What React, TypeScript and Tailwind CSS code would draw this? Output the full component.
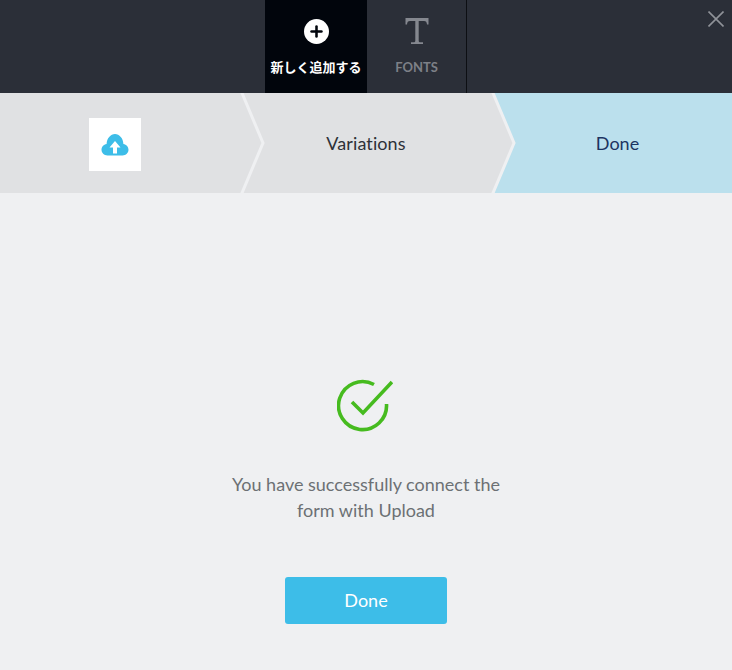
import { Plus } from 'lucide-react'

const sans = 'font-["Lato","Noto_Sans_CJK_JP",sans-serif]'

function Chevron({ className }: { className: string }) {
  return (
    <svg viewBox="0 0 26 100" width="26" height="100" className={`absolute top-0 ${className}`}>
      <polygon points="0,0 2,0 23,50 2,100 0,100" fill="#e0e1e3" />
      <polyline points="1.16,-2 23,50 1.16,102" fill="none" stroke="#eff0f2" strokeWidth="3" />
    </svg>
  )
}

export default function App() {
  return (
    <div className={`w-[732px] h-[670px] bg-[#eff0f2] relative overflow-hidden ${sans}`}>
      {/* Top tabs */}
      <div className="h-[93px] bg-[#2b2f38] flex pl-[265px]">
        <div className="w-[102px] bg-[#01050c] flex flex-col items-center">
          <div className="mt-[19px] w-[25px] h-[25px] rounded-full bg-white flex items-center justify-center">
            <Plus size={17} strokeWidth={3.6} className="text-[#01050c]" />
          </div>
          <span className="mt-[14px] text-[13px] leading-[18px] font-bold text-white whitespace-nowrap">新しく追加する</span>
        </div>
        <div className="w-[100px] border-r border-[#0d0f13] flex flex-col items-center">
          <svg viewBox="0 0 24 26" width="24" height="26" className="mt-[18px]" fill="#85888f">
            <path d="M0.5 0 H23.5 V6.5 H22 C21.8 4 21 3 19 3 H13.7 V23 C13.7 24 14.4 24.3 15.5 24.3 H18 V26 H6 V24.3 H8.5 C9.6 24.3 10.3 24 10.3 23 V3 H5 C3 3 2.2 4 2 6.5 H0.5 Z" />
          </svg>
          <span className="mt-[14px] text-[13px] leading-[18px] font-bold text-[#7d8087]">FONTS</span>
        </div>
      </div>
      <button className="absolute top-[11px] right-[8px] w-4 h-4">
        <svg viewBox="0 0 16 16" width="16" height="16" stroke="#8f9298" strokeWidth="1.6" fill="none">
          <path d="M0.5 0.5 L15.5 15.5 M15.5 0.5 L0.5 15.5" />
        </svg>
      </button>

      {/* Steps */}
      <div className="h-[100px] flex bg-[#e0e1e3]">
        <div className="relative w-[241px] flex items-center">
          <div className="ml-[89px] mt-[2px] w-[52px] h-[53px] bg-white flex items-center justify-center">
            <svg viewBox="0 0 28 23" width="28" height="23">
              <path d="M6.5 22.5 C3 22.5 0.5 19.8 0.5 16.8 C0.5 13.8 2.6 11.4 5.6 11 C5.8 5.4 9.6 1 14 1 C18.4 1 22.2 5.4 22.4 11 C25.4 11.4 27.5 13.8 27.5 16.8 C27.5 19.8 25 22.5 21.5 22.5 Z" fill="#3dbde8" />
              <path d="M14 8 L19.5 14.5 L16 14.5 L16 20.5 L12 20.5 L12 14.5 L8.5 14.5 Z" fill="#fff" />
            </svg>
          </div>
          <Chevron className="left-[240px] z-10" />
        </div>
        <div className="relative w-[251px] flex items-center justify-center text-[18px] text-[#2e3138]">
          <span className="ml-[-1px] tracking-[0.1px]">Variations</span>
          <Chevron className="left-[250px] z-10" />
        </div>
        <div className="flex-1 bg-[#bbe0ed] flex items-center justify-center text-[18px] text-[#1c3461]">
          <span className="ml-[11px]">Done</span>
        </div>
      </div>

      {/* Success */}
      <div className="flex flex-col items-center">
        <svg viewBox="0 0 56 54" width="56" height="54" className="mt-[185px] ml-[-3px]">
          <path d="M37 6.5 A24 24 0 1 0 49.5 26" fill="none" stroke="#46bb1f" strokeWidth="3.6" />
          <path d="M15 24 L26 35 L55 4" fill="none" stroke="#46bb1f" strokeWidth="3.6" />
        </svg>
        <p className="mt-[39px] w-[300px] text-center text-[18px] leading-[26px] text-[#6c7074]">
          You have successfully connect the form with Upload
        </p>
        <button className="mt-[54px] w-[162px] h-[47px] rounded-[3px] bg-[#3dbde8] text-white text-[18px]">Done</button>
      </div>
    </div>
  )
}
